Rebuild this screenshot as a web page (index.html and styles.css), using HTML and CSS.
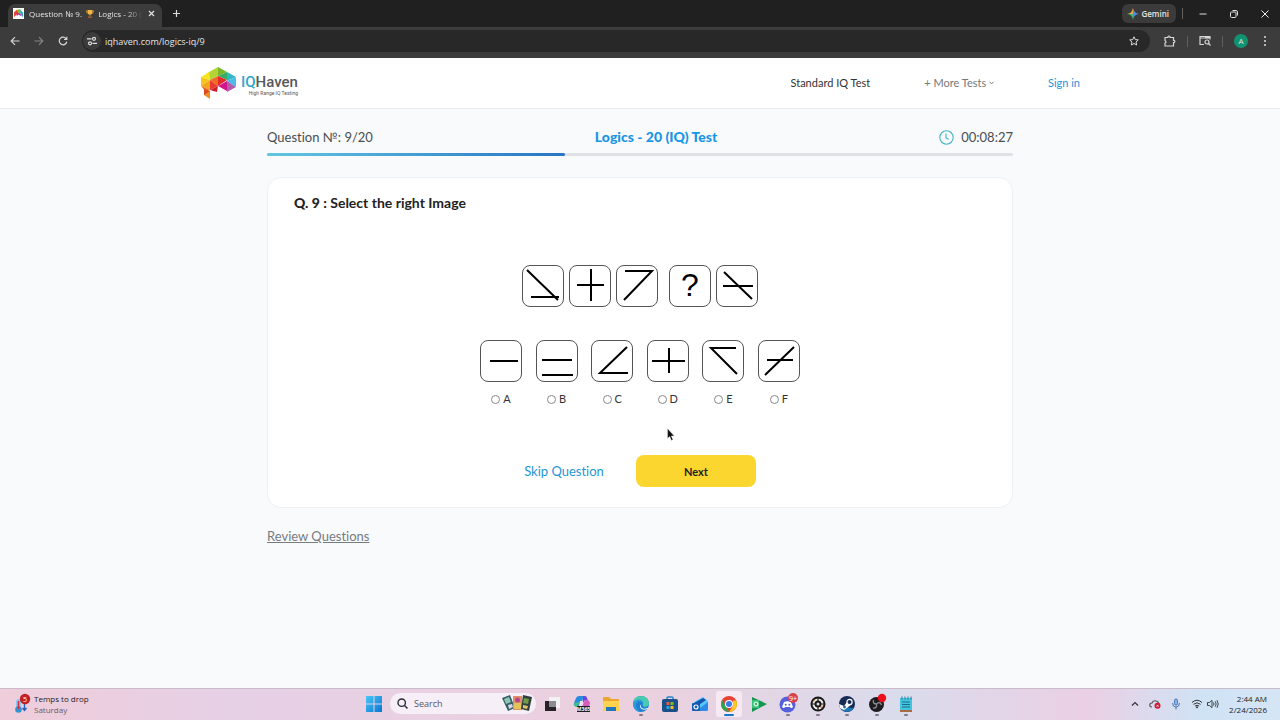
FILE: index.html
```html
<!DOCTYPE html>
<html lang="en">
<head>
    <meta charset="UTF-8">
    <meta name="viewport" content="width=device-width, initial-scale=1.0">
    <title>Question № 9. 🏆 Logics - 20 (IQ) Test</title>
    <link rel="stylesheet" href="styles.css">
</head>
<body>
    <!-- Browser -->
    <div class="tabstrip">
        <div class="tab">
            <svg class="favicon" viewBox="0 0 12 12"><rect width="12" height="12" fill="#fff"/><path d="M1 10V5l3-3 2 3z" fill="#e8452c"/><path d="M4 2l4-1 1 4-3 1z" fill="#8bbf30"/><path d="M8 2l3 3v5L8 7z" fill="#31a9d6"/><path d="M4 5l4 1 1 3-3-2-2 2z" fill="#c02790"/></svg>
            <span class="tab-title">Question № 9. <svg class="trophy" viewBox="0 0 10 10"><path d="M2 0h6v3q0 3-3 3T2 3z" fill="#f5b83d"/><path d="M2 1H.5q0 3 2 3M8 1h1.500q0 3-2 3" fill="none" stroke="#e49a2a"/><path d="M4.500 5h1v3h-1z" fill="#d98c25"/><path d="M2.500 8h5v2h-5z" fill="#9c5630"/></svg> Logics - 20 (</span>
            <button class="icon-btn" aria-label="Close tab"><svg width="7" height="7" viewBox="0 0 7 7"><path d="M1 1l5 5M6 1L1 6" stroke="#e3e3e3" stroke-width="1.200"/></svg></button>
        </div>
        <button class="icon-btn new-tab" aria-label="New tab"><svg width="9" height="9" viewBox="0 0 9 9"><path d="M4.500 1v7M1 4.500h7" stroke="#dcdcdc" stroke-width="1.200"/></svg></button>
        <button class="gemini">
            <svg width="12" height="12" viewBox="0 0 10 10"><path d="M5 0Q5.500 4.500 10 5H0Q4.500 4.500 5 0z" fill="#ec6257"/><path d="M5 0Q5.500 4.500 10 5 5.500 5.500 5 10z" fill="#4b8df8"/><path d="M0 5h5v5Q4.500 5.500 0 5z" fill="#48b56a"/><path d="M0 5q4.500-.5 5-5v5z" fill="#d7b045"/></svg>
            Gemini
        </button>
        <span class="divider"></span>
        <div class="window-buttons">
            <button class="icon-btn" aria-label="Minimize"><svg width="8" height="8" viewBox="0 0 8 8"><path d="M.5 4h7" stroke="#ddd"/></svg></button>
            <button class="icon-btn" aria-label="Restore"><svg width="8" height="8" viewBox="0 0 8 8" fill="none" stroke="#ddd"><rect x=".5" y="2" width="5.500" height="5.500" rx="1"/><path d="M2.500 .5H6q1.500 0 1.500 1.500v3.500"/></svg></button>
            <button class="icon-btn" aria-label="Close"><svg width="8" height="8" viewBox="0 0 8 8"><path d="M.5 .5l7 7M7.500 .5l-7 7" stroke="#eee"/></svg></button>
        </div>
    </div>
    <div class="toolbar">
        <button class="icon-btn" aria-label="Back"><svg width="10" height="10" viewBox="0 0 10 10" fill="none" stroke="#d5d5d5" stroke-width="1.200"><path d="M9.500 5H1.500M5 1.200L1.200 5 5 8.800"/></svg></button>
        <button class="icon-btn" aria-label="Forward"><svg width="10" height="10" viewBox="0 0 10 10" fill="none" stroke="#858585" stroke-width="1.200"><path d="M.5 5h8M5 1.200L8.800 5 5 8.800"/></svg></button>
        <button class="icon-btn" aria-label="Reload"><svg width="10" height="10" viewBox="0 0 10 10" fill="none" stroke="#d5d5d5" stroke-width="1.200"><path d="M8.300 3A3.800 3.800 0 1 0 8.800 5.600M8.800 .8v2.700H6"/></svg></button>
        <div class="address">
            <span class="site-info"><svg width="10" height="10" viewBox="0 0 10 10" fill="none" stroke="#ddd" stroke-width="1.200"><path d="M0 2.800h1M4.500 2.800H0M5.500 7.300H10"/><circle cx="7" cy="2.800" r="1.500"/><circle cx="3" cy="7.300" r="1.500"/></svg></span>
            <input class="url" type="text" value="iqhaven.com/logics-iq/9" aria-label="Address">
            <button class="icon-btn" aria-label="Bookmark"><svg width="10" height="10" viewBox="0 0 10 10" fill="none" stroke="#ddd"><path d="M5 .8l1.300 2.800 3 .3L7 6l.7 3L5 7.500 2.300 9 3 6 .7 3.900l3-.3z"/></svg></button>
        </div>
        <div class="toolbar-end">
            <button class="icon-btn" aria-label="Extensions"><svg width="12" height="12" viewBox="0 0 12 12" fill="none" stroke="#d5d5d5" stroke-width="1.200"><path d="M1 2.500h3V1.600q1-1.200 2 0v.9h3.500v3h.8q1.200 1 0 2h-.8v3.500H1V8q2-1 0-2.500z"/></svg></button>
            <span class="divider"></span>
            <button class="icon-btn" aria-label="Search tabs"><svg width="12" height="12" viewBox="0 0 12 12" fill="none" stroke="#d5d5d5" stroke-width="1.200"><path d="M5 9.500H1v-8h10v3M1 3h10"/><path d="M6 2.200h5" stroke-width="2"/><circle cx="8" cy="7" r="2"/><path d="M9.500 8.500l2 2"/></svg></button>
            <span class="divider"></span>
            <button class="avatar">A</button>
            <button class="icon-btn" aria-label="Menu"><svg width="4" height="10" viewBox="0 0 4 10" fill="#ddd"><circle cx="2" cy="1" r="1"/><circle cx="2" cy="5" r="1"/><circle cx="2" cy="9" r="1"/></svg></button>
        </div>
    </div>

    <!-- Site header -->
    <header class="site-header">
        <div class="header-inner">
            <a class="logo" href="#">
                <svg width="37" height="33" viewBox="0 0 37 33">
                    <path d="M1 10l8-5 1 8z" fill="#f7e61c"/><path d="M9 5l9-5v9l-8 4z" fill="#b5d334"/><path d="M18 0l9 5-9 4z" fill="#78b82a"/><path d="M27 5v8l-9-4z" fill="#38ad68"/>
                    <path d="M1 10l9 3-9 6z" fill="#f6c51b"/><path d="M1 19l9-6v10z" fill="#f3a51e"/><path d="M10 13l8-4v10z" fill="#ef6c25"/><path d="M10 13l8 6-8 4z" fill="#e83c2e"/>
                    <path d="M18 9l9 4-9 6z" fill="#e5292c"/><path d="M27 5l9 5-9 4z" fill="#2fb9c5"/><path d="M36 10v10l-9-6z" fill="#4bbce9"/><path d="M27 14v10l-9-5z" fill="#d2168b"/><path d="M27 14l9 6-9 5z" fill="#b45bad"/>
                    <path d="M1 19l9 4-5 1z" fill="#ee6b25"/><path d="M10 23l8-4-1 6z" fill="#cb1f2e"/><path d="M4 22l6 2v8l-6-4z" fill="#f18b22"/><path d="M4 22l6 2-6 4z" fill="#d94a24"/>
                </svg>
                <span class="logo-text">
                    <span class="logo-name"><span class="logo-iq">IQ</span>Haven</span>
                    <span class="logo-tag">High Range IQ Testing</span>
                </span>
            </a>
            <nav class="nav">
                <a class="nav-link nav-main" href="#">Standard IQ Test</a>
                <a class="nav-link nav-more" href="#">+ More Tests <svg width="5" height="6" viewBox="0 0 5 6"><path d="M.5 .8l2 2 2-2" fill="none" stroke="#777"/></svg></a>
                <a class="nav-link nav-sign" href="#">Sign in</a>
            </nav>
        </div>
    </header>

    <!-- Test -->
    <main class="main">
        <div class="test-info">
            <span>Question №: 9/20</span>
            <h1 class="test-name">Logics - 20 (IQ) Test</h1>
            <span class="timer"><svg width="15" height="15" viewBox="0 0 15 15" fill="none" stroke="#45b5c4" stroke-width="1.100"><circle cx="7.500" cy="7.500" r="6.700"/><path d="M7 3.500v4.300l2.600 1.400"/></svg>00:08:27</span>
        </div>
        <div class="progress"><div class="progress-bar" style="width: 40%"></div></div>

        <form class="card">
            <h2 class="question"><b>Q. 9 :</b> Select the right Image</h2>
            <div class="sequence">
                <svg class="tile" viewBox="1 1 40 40"><path d="M5 5l31 30M9 32h28"/></svg>
                <svg class="tile" viewBox="1 1 40 40"><path d="M8 20h27M22 4v32"/></svg>
                <svg class="tile" viewBox="1 1 40 40"><path d="M9 6h27L8 35"/></svg>
                <span class="tile tile-unknown">?</span>
                <svg class="tile" viewBox="1 1 40 40"><path d="M8 7l28 27M7 21h30"/></svg>
            </div>
            <div class="answers">
                <label class="answer">
                    <svg class="tile" viewBox="1 1 40 40"><path d="M10 21h28"/></svg>
                    <span class="choice"><input type="radio" name="answer" value="A">A</span>
                </label>
                <label class="answer">
                    <svg class="tile" viewBox="1 1 40 40"><path d="M6 20h30M6 35h31"/></svg>
                    <span class="choice"><input type="radio" name="answer" value="B">B</span>
                </label>
                <label class="answer">
                    <svg class="tile" viewBox="1 1 40 40"><path d="M36 7L9 33h28"/></svg>
                    <span class="choice"><input type="radio" name="answer" value="C">C</span>
                </label>
                <label class="answer">
                    <svg class="tile" viewBox="1 1 40 40"><path d="M5 21h33M22 8v25"/></svg>
                    <span class="choice"><input type="radio" name="answer" value="D">D</span>
                </label>
                <label class="answer">
                    <svg class="tile" viewBox="1 1 40 40"><path d="M34 8H9l26 26"/></svg>
                    <span class="choice"><input type="radio" name="answer" value="E">E</span>
                </label>
                <label class="answer">
                    <svg class="tile" viewBox="1 1 40 40"><path d="M36 7L7 35M9 20h26"/></svg>
                    <span class="choice"><input type="radio" name="answer" value="F">F</span>
                </label>
            </div>
            <div class="actions">
                <a class="skip" href="#">Skip Question</a>
                <button class="next" type="button">Next</button>
            </div>
            <svg class="cursor" width="8" height="13" viewBox="0 0 8 13"><path d="M.5 .5v10l2.200-2 1.700 4 1.600-.8-1.700-3.700h3z" fill="#111" stroke="#fff" stroke-width=".4"/></svg>
        </form>

        <a class="review" href="#">Review Questions</a>
    </main>

    <!-- Taskbar -->
    <footer class="taskbar">
        <div class="weather">
            <svg width="20" height="20" viewBox="0 0 20 20"><rect x="3" y="5" width="5" height="12" rx="2.500" fill="#8cc7ee"/><circle cx="5.500" cy="15.500" r="3.300" fill="#3693d2"/><path d="M5.500 7v8" stroke="#d22e43" stroke-width="1.600"/><path d="M11.500 10v6M9.500 14l2 2.500 2-2.500" fill="none" stroke="#2862bd" stroke-width="1.400"/><circle cx="12" cy="5" r="5.200" fill="#c32025"/><text x="12" y="7.500" class="badge-text">5</text></svg>
            <div class="weather-text"><div>Temps to drop</div><div class="weather-day">Saturday</div></div>
        </div>
        <div class="dock">
            <svg width="16" height="16" viewBox="0 0 16 16"><defs><linearGradient id="win" x2="1" y2="1"><stop stop-color="#4cc8f5"/><stop offset="1" stop-color="#0874d3"/></linearGradient></defs><path d="M0 0h7.500v7.500H0zM8.500 0H16v7.500H8.500zM0 8.500h7.500V16H0zM8.500 8.500H16V16H8.500z" fill="url(#win)"/></svg>
            <div class="search">
                <svg width="11" height="11" viewBox="0 0 11 11" fill="none" stroke="#2b2b35" stroke-width="1.400"><circle cx="4.700" cy="4.700" r="3.700"/><path d="M7.500 7.500l3 3"/></svg>
                <input type="text" placeholder="Search" aria-label="Search">
                <svg width="30" height="17" viewBox="0 0 30 17"><path d="M0 3l8-3 5 13-7 3z" fill="#365e68"/><path d="M2 4l5-2 2 5-5 2z" fill="#8fc5b5"/><path d="M6 10l4-1 1 3-4 2z" fill="#d9d5e5"/><path d="M11 1h9v14h-9z" fill="#e48c63"/><path d="M12 8h7v6h-7z" fill="#e3c35b"/><circle cx="15.500" cy="5" r="2.500" fill="#b7478c"/><path d="M21 0l9 2-3 14-8-2z" fill="#32413f"/><path d="M22 3l5 1-1 5-5-1z" fill="#6f9b43"/><path d="M21 10l5 1-1 3-4-1z" fill="#e0c56a"/></svg>
            </div>
            <div class="apps">
                <span class="app"><svg viewBox="0 0 16 16"><path d="M5 1h11v11H5z" fill="#f3f1f4"/><path d="M1 5h11v10H1z" fill="#242428"/><path d="M5 5h7v6H5z" fill="#8d8a8f"/></svg></span>
                <span class="app"><svg viewBox="0 0 16 16"><path d="M5 0h5q1.500 0 2 2l-3 1-3 7H2q-3 0-2-3l2-5q1-2 3-2z" fill="#288ce0"/><path d="M9 0h2q1.500 0 2 2l.7 2H11L9 7z" fill="#7046d8"/><path d="M0 7l5-1-1 5H2q-2.500-1-2-4z" fill="#44bd8a"/><path d="M6 5h3l-2 5H5z" fill="#efe6f2"/><path d="M11 4h3q2 1 2 3l-1 4H8z" fill="#d55dbd"/><path d="M3 10h13v6H3z" fill="#221d24"/><text x="9.500" y="15" class="m365-text">M365</text></svg></span>
                <span class="app"><svg viewBox="0 0 16 16"><path d="M0 2q0-1 1-1h5l2 2h7q1 0 1 1v11H0z" fill="#e9a72e"/><path d="M0 5h16v9q0 1-1 1H1q-1 0-1-1z" fill="#fdd251"/><path d="M3 11h10v4H3z" fill="#2176bd"/></svg></span>
                <span class="app running"><svg viewBox="0 0 16 16"><circle cx="8" cy="8" r="8" fill="#1f7fd0"/><path d="M0 7Q1 0 8 0q7 0 8 7 0 4-5 4-2-1-1-3 0-4-4-4-4 0-6 3z" fill="#48cbae"/><path d="M10 8q-1-3-4-2.500Q3 6 3 10q1 4 5 6-7 0-8-8 2-4.500 6-4.500T10 8z" fill="#2a9be0"/><path d="M8.500 8q-2 3 1.500 4.500 3 .5 5.500-1l-1 1.500q-3 1.500-6 0-3-2.500 0-5z" fill="#e6f1f6"/></svg></span>
                <span class="app"><svg viewBox="0 0 16 16"><path d="M5 4V2q0-1 1-1h4q1 0 1 1v2" fill="none" stroke="#2985c8" stroke-width="1.500"/><rect y="3" width="16" height="13" rx="2" fill="#1a4f87"/><path d="M4.500 6h3v3h-3z" fill="#f25a37"/><path d="M8.500 6h3v3h-3z" fill="#82bb26"/><path d="M4.500 10h3v3h-3z" fill="#21a6e8"/><path d="M8.500 10h3v3h-3z" fill="#f7bc25"/></svg></span>
                <span class="app"><svg viewBox="0 0 16 16"><path d="M2 6l9-5 5 4v10H4z" fill="#58c7f6"/><path d="M2 7l9-5 3 2-10 7z" fill="#1554b2"/><path d="M4 15l12-9v7q0 2-2 2z" fill="#2a8be9"/><rect y="7" width="8" height="8" rx="1" fill="#155bb4"/><circle cx="4" cy="11" r="2" fill="none" stroke="#fff" stroke-width="1.200"/></svg></span>
                <span class="app active"><svg viewBox="0 0 16 16"><circle cx="8" cy="8" r="8" fill="#e64235"/><path d="M1.100 4L5 10.500 8 16A8 8 0 0 1 1.100 4z" fill="#31a451"/><path d="M8 16l4-6V4.500h3.200A8 8 0 0 1 8 16z" fill="#fbc826"/><circle cx="8" cy="8" r="4" fill="#fff"/><circle cx="8" cy="8" r="3" fill="#347ce8"/></svg></span>
                <span class="app"><svg viewBox="0 0 16 16"><path d="M1 1l15 7-15 8z" fill="#189650"/><path d="M1 4h7v8H1z" fill="#35c477"/><circle cx="5" cy="8" r="2.500" fill="#c7f3db"/><circle cx="5" cy="8" r="1" fill="#199553"/></svg></span>
                <span class="app running"><svg viewBox="0 0 16 16"><circle cx="7.500" cy="8.500" r="8" fill="#5460db"/><path d="M4 6q3.500-1.500 7 0l2 5q-2 2-3 0H5q-1 2-3 0z" fill="#fff"/><circle cx="5.700" cy="8.700" r="1" fill="#5460db"/><circle cx="9.300" cy="8.700" r="1" fill="#5460db"/><circle cx="13" cy="2" r="5" fill="#d7434d"/><text x="13" y="4.500" class="badge-text">9+</text></svg></span>
                <span class="app running"><svg viewBox="0 0 16 16"><circle cx="8" cy="8" r="7.500" fill="#18191b"/><circle cx="8" cy="8" r="4.500" fill="none" stroke="#f5eee7" stroke-width="2"/><path d="M8 2v3M8 11v3M2 8h3M11 8h3" stroke="#18191b" stroke-width="1.200"/><path d="M10 12l3-3-1 3z" fill="#ed7b34"/><path d="M5 4L3 7l1-3z" fill="#ed7b34"/><circle cx="8" cy="8" r="1.500" fill="#ddd"/></svg></span>
                <span class="app running"><svg viewBox="0 0 16 16"><circle cx="8" cy="8" r="8" fill="#172c57"/><path d="M1 11a8 8 0 0 0 14 1z" fill="#197ab5"/><path d="M0 8l5 2 3-4 3-2 2 4-5 4-3 2-4-2z" fill="#fff"/><circle cx="10.500" cy="6" r="2.600" fill="#172c57" stroke="#fff" stroke-width="1.200"/><circle cx="5.500" cy="11" r="1.400" fill="#24669b"/></svg></span>
                <span class="app running"><svg viewBox="0 0 16 16"><circle cx="7.500" cy="8.500" r="7.500" fill="#1d1c20"/><path d="M7.500 8q-4 0-3-4M7.500 8q3.500-3 5 1M7.500 8q1 4.500-3.500 4" fill="none" stroke="#8f8c92" stroke-width="1.300"/><circle cx="13" cy="2" r="4.200" fill="#ed101c"/></svg></span>
                <span class="app running"><svg viewBox="0 0 16 16"><path d="M2 2h12v13H2z" fill="#45c5dd"/><path d="M2 14h12v2H2z" fill="#a86b44"/><path d="M4 .5v3M7 .5v3M10 .5v3M13 .5v3" stroke="#237c9d"/><path d="M4 6h8M4 8.500h8M4 11h8" stroke="#176f8e"/></svg></span>
            </div>
        </div>
        <div class="tray">
            <svg width="8" height="6" viewBox="0 0 8 6"><path d="M1 4.500l3-3 3 3" fill="none" stroke="#333" stroke-width="1.200"/></svg>
            <svg width="12" height="10" viewBox="0 0 12 10"><path d="M3 8Q0 8 1 5q1-1 2-1 1-3 4-2 2 0 3 3" fill="none" stroke="#555" stroke-width="1.200"/><circle cx="8.500" cy="6.800" r="3" fill="#ce1731"/><path d="M7.500 5.800l2 2M9.500 5.800l-2 2" stroke="#fff" stroke-width=".8"/></svg>
            <svg width="10" height="12" viewBox="0 0 10 12" fill="none" stroke="#4775b8"><rect x="3.500" y="1" width="3" height="6" rx="1.500" fill="#8fb5e4"/><path d="M1.500 5q0 4 3.500 4t3.500-4M5 9v2.500"/></svg>
            <svg class="wifi" width="12" height="10" viewBox="0 0 12 10" fill="none" stroke="#333"><path d="M1 3.500q5-4.500 10 0M2.500 5.300q3.500-3 7 0M4 7q2-1.500 4 0"/><circle cx="6" cy="8.300" r=".6" fill="#333"/></svg>
            <svg width="12" height="10" viewBox="0 0 12 10" fill="none" stroke="#333" stroke-width=".9"><path d="M.5 3.500h2L5 1.300v7.400L2.500 6.500h-2zM6.500 3.500q1 1.500 0 3M8.200 2.300q2 2.700 0 5.400M10 1.200q2.500 3.800 0 7.600"/></svg>
            <div class="clock"><div>2:44 AM</div><div>2/24/2026</div></div>
        </div>
    </footer>
</body>
</html>
```
FILE: styles.css
```css
* {
    box-sizing: border-box;
}
body {
    margin: 0;
    min-height: 100vh;
    display: flex;
    flex-direction: column;
    font-family: Lato, "Liberation Sans", sans-serif;
    font-variant-ligatures: none;
    background-color: #f8fafc;
    color: #222;
}
svg {
    flex-shrink: 0;
    overflow: visible;
}
button, input {
    font: inherit;
    color: inherit;
    border: none;
    background: none;
    padding: 0;
    margin: 0;
}
a {
    text-decoration: none;
}

/* Browser */
.tabstrip, .toolbar, .taskbar {
    font-family: "Open Sans", "Noto Sans", sans-serif;
}
.tabstrip {
    height: 27px;
    display: flex;
    align-items: center;
    padding: 0 11px 0 8px;
    background-color: #1f201f;
    color: #e3e3e3;
}
.tab {
    width: 154px;
    height: 23px;
    align-self: flex-end;
    display: flex;
    align-items: center;
    gap: 5px;
    padding: 0 7px 4px 5px;
    border-radius: 7px 7px 0 0;
    background-color: #3c3c3c;
    font-size: 8px;
}
.favicon {
    width: 11px;
    height: 11px;
}
.trophy {
    width: 8px;
    height: 8px;
    margin: 0 2px;
    vertical-align: -1px;
}
.tab-title {
    flex: 1;
    white-space: nowrap;
    -webkit-mask-image: linear-gradient(to right, #000 85%, transparent);
    mask-image: linear-gradient(to right, #000 85%, transparent);
}
.icon-btn {
    display: flex;
    align-items: center;
    justify-content: center;
}
.new-tab {
    margin: 0 auto 0 10px;
}
.gemini {
    height: 19px;
    display: flex;
    align-items: center;
    gap: 2px;
    padding: 0 7px 0 5px;
    border-radius: 6px;
    background-color: #3a3b3a;
    font-size: 8px;
    font-weight: 600;
}
.divider {
    width: 1px;
    height: 11px;
    background-color: #606060;
}
.tabstrip .divider {
    margin: 0 16px 0 6px;
}
.window-buttons {
    display: flex;
    gap: 23px;
}
.toolbar {
    height: 31px;
    display: flex;
    align-items: center;
    gap: 14px;
    padding: 0 13px 3px 10px;
    background-color: #3c3c3c;
    color: #e3e3e3;
}
.address {
    flex: 1;
    height: 22px;
    display: flex;
    align-items: center;
    gap: 4px;
    padding: 0 11px 0 1px;
    border-radius: 11px;
    background-color: #282828;
}
.site-info {
    width: 18px;
    height: 18px;
    display: flex;
    align-items: center;
    justify-content: center;
    border-radius: 50%;
    background-color: #3c3c3c;
}
.url {
    flex: 1;
    font-size: 9px;
}
.toolbar-end {
    display: flex;
    align-items: center;
    gap: 11px;
}
.avatar {
    width: 14px;
    height: 14px;
    margin-right: 4px;
    border-radius: 50%;
    background-color: #12936f;
    font-size: 8px;
    line-height: 14px;
    text-align: center;
}

/* Site header */
.site-header {
    height: 51px;
    background-color: #fff;
    border-bottom: 1px solid #e9ecef;
}
.header-inner {
    max-width: 880px;
    height: 100%;
    margin: 0 auto;
    display: flex;
    align-items: center;
    justify-content: space-between;
}
.logo {
    display: flex;
    align-items: center;
    gap: 4px;
}
.logo-text {
    display: flex;
    flex-direction: column;
    padding-top: 2px;
    font-family: Roboto, sans-serif;
    color: #58585b;
}
.logo-name {
    font-size: 15px;
    line-height: 18px;
    font-weight: 500;
}
.logo-iq {
    color: #2ca5cf;
}
.logo-tag {
    font-size: 5px;
    line-height: 5px;
    text-align: right;
}
.nav {
    display: flex;
    padding-bottom: 1px;
    font-size: 11px;
}
.nav-main {
    color: #333;
}
.nav-more {
    margin: 0 54px;
    color: #777;
}
.nav-sign {
    color: #1e93dc;
}

/* Test */
.main {
    flex: 1;
    width: 100%;
    max-width: 746px;
    margin: 0 auto;
}
.test-info {
    display: flex;
    justify-content: space-between;
    align-items: center;
    margin-top: 18px;
    font-size: 13px;
    line-height: 20px;
    color: #4a4d50;
}
.test-name {
    margin: 0;
    font-size: 14px;
    font-weight: 900;
    color: #1995e6;
}
.timer {
    display: flex;
    align-items: center;
    gap: 7px;
}
.progress {
    height: 3px;
    margin-top: 6px;
    border-radius: 2px;
    background-color: #dfe2e5;
}
.progress-bar {
    height: 100%;
    border-radius: 2px;
    background: linear-gradient(to right, #62c6e0, #2874c5);
}
.card {
    position: relative;
    margin-top: 21px;
    padding: 15px 26px 20px;
    border: 1px solid #edf0f2;
    border-radius: 14px;
    background-color: #fff;
}
.question {
    margin: 0;
    font-size: 14px;
    line-height: 20px;
    font-weight: 700;
}
.sequence {
    display: flex;
    justify-content: center;
    gap: 5px;
    margin-top: 52px;
}
.tile {
    width: 42px;
    height: 42px;
    border: 1px solid #555;
    border-radius: 8px;
    fill: none;
    stroke: #000;
    stroke-width: 2;
}
.tile-unknown {
    margin-left: 6px;
    font-family: "Liberation Sans", sans-serif;
    font-size: 32px;
    line-height: 38px;
    text-align: center;
    color: #000;
}
.answers {
    width: 320px;
    display: flex;
    justify-content: space-between;
    margin: 33px auto 0;
}
.answer {
    display: flex;
    flex-direction: column;
    gap: 9px;
}
.choice {
    display: flex;
    align-items: center;
    justify-content: center;
    gap: 3px;
    font-size: 11px;
    line-height: 16px;
    color: #333;
}
.choice input {
    appearance: none;
    width: 9px;
    height: 9px;
    border: 1px solid #888;
    border-radius: 50%;
    background-color: #fff;
}
.choice input:checked {
    border: 3px solid #1995e6;
}
.actions {
    display: flex;
    justify-content: center;
    align-items: center;
    gap: 32px;
    margin-top: 48px;
}
.skip {
    font-size: 13px;
    color: #1f96d3;
}
.next {
    width: 120px;
    height: 32px;
    border-radius: 8px;
    background-color: #fad62f;
    font-size: 11px;
    font-weight: 700;
    cursor: pointer;
}
.cursor {
    position: absolute;
    left: 399px;
    top: 250px;
}
.review {
    display: inline-block;
    margin-top: 18px;
    font-size: 13px;
    line-height: 20px;
    color: #777b80;
    text-decoration: underline;
}

/* Taskbar */
.taskbar {
    height: 32px;
    display: grid;
    grid-template-columns: 1fr auto 1fr;
    align-items: center;
    padding: 0 13px 2px;
    border-top: 1px solid #c9bcc8;
    background: linear-gradient(to right, #efcdda, #e6d0e6 18%, #ecd0de 50%, #d9dcec 70%, #ebcfe4 85%, #cfe3f5 94%, #d5e5f5);
    font-size: 8px;
    line-height: 11px;
    color: #222;
}
.weather {
    display: flex;
    align-items: center;
    gap: 1px;
}
.weather-day {
    color: #685b69;
}
.badge-text {
    fill: #fff;
    font-size: 7px;
    text-anchor: middle;
}
.m365-text {
    fill: #fff;
    font-size: 5px;
    font-weight: 700;
    text-anchor: middle;
}
.dock {
    display: flex;
    align-items: center;
    gap: 8px;
}
.search {
    width: 146px;
    height: 21px;
    display: flex;
    align-items: center;
    gap: 6px;
    padding: 0 4px 0 7px;
    border-radius: 11px;
    background-color: #f6eff7;
}
.search input {
    flex: 1;
    min-width: 0;
    font-size: 9px;
}
.search input::placeholder {
    color: #5a555e;
}
.apps {
    width: 370px;
    display: flex;
    justify-content: space-between;
}
.app {
    position: relative;
    width: 16px;
    height: 16px;
}
.app svg {
    display: block;
    position: relative;
    width: 16px;
    height: 16px;
}
.running::after, .active::after {
    content: "";
    position: absolute;
    left: 6px;
    bottom: -4px;
    width: 4px;
    height: 2px;
    border-radius: 1px;
    background-color: #827a88;
}
.active::before {
    content: "";
    position: absolute;
    inset: -5px;
    border-radius: 3px;
    background-color: #f7e9f2;
}
.active::after {
    left: 3px;
    width: 10px;
    background-color: #1877c9;
}
.tray {
    display: flex;
    align-items: center;
    justify-content: flex-end;
    gap: 10px;
}
.wifi {
    margin-right: -6px;
}
.clock {
    text-align: right;
}
```
